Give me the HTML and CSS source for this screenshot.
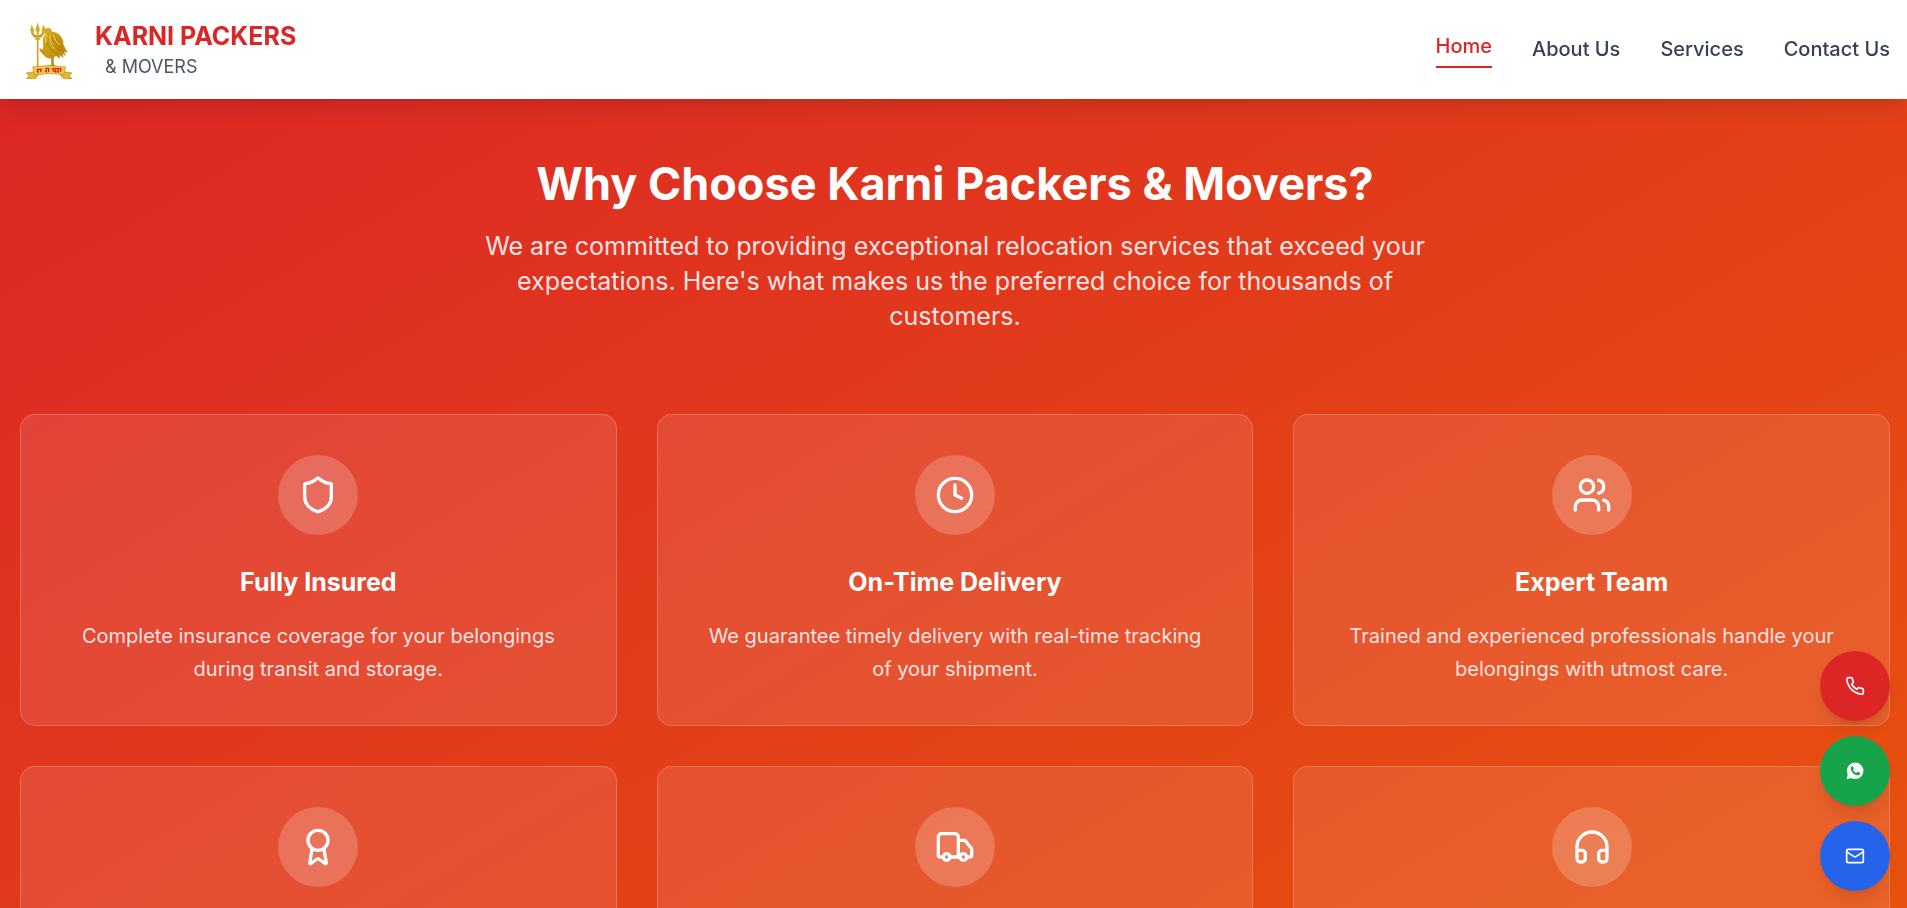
FILE: index.html
```html
<!DOCTYPE html>
<html lang="en">
<head>
<meta charset="utf-8">
<meta name="viewport" content="width=device-width, initial-scale=1">
<title>Karni Packers &amp; Movers</title>
<link rel="stylesheet" href="styles.css">
</head>
<body>
<header class="header">
  <a class="brand" href="#">
    <svg class="brand-logo" viewBox="15 12 180 180" aria-hidden="true">
      <defs>
        <linearGradient id="gold" x1="0" y1="0" x2="1" y2="1">
          <stop offset="0" stop-color="#dcb32a"/>
          <stop offset="0.5" stop-color="#c6960f"/>
          <stop offset="1" stop-color="#b58210"/>
        </linearGradient>
      </defs>
      <g fill="none" stroke="#cfa224" stroke-linecap="round" stroke-linejoin="round">
        <path stroke-width="5" d="M68 44V166"/>
        <path stroke-width="7" d="M51 43Q49 64 68 64Q87 64 85 43"/>
        <path stroke-width="5" d="M57 65H79M62 72H74"/>
      </g>
      <g fill="#d6ab26">
        <path d="M68 22L75 44L68 56L61 44Z"/>
        <path d="M50 29L58 46L53 56L45 46Z"/>
        <path d="M86 29L93 46L85 56L79 46Z"/>
      </g>
      <path fill="url(#gold)" d="M85 50Q89 39 99 38Q109 39 111 50Q130 51 139 66Q147 78 145 88L158 114L147 110L153 124L142 116L146 129L133 120L136 131L122 122L116 129L117 154H109L108 130Q90 132 84 115L76 109L83 103Q87 90 83 78Q84 62 94 54L86 57Z"/>
      <g fill="none" stroke="#8e6505" stroke-width="2" opacity="0.7">
        <path d="M101 68Q112 100 145 110M109 63Q116 90 145 101M120 60Q124 79 141 90M96 84Q104 108 128 117"/>
      </g>
      <g fill="none" stroke="#efd660" stroke-width="3">
        <path d="M106 61Q103 85 119 101M116 60Q119 77 134 90M94 59Q89 71 92 83"/>
      </g>
      <path fill="none" stroke="#b5830d" stroke-width="4" stroke-linecap="round" d="M86 117L75 102M102 156L113 150L124 156"/>
      <path fill="#e2b82c" stroke="#b98a14" stroke-width="2" d="M60 170L34 174L43 182L34 191L62 190L70 180ZM145 170L171 174L163 182L171 191L144 190L136 180Z"/>
      <path fill="#f2cf4a" stroke="#b98a14" stroke-width="2" d="M53 156Q102 147 152 156L146 179Q102 171 60 180Z"/>
      <path fill="none" stroke="#d92c1d" stroke-width="4" d="M65 163H82M69 163V172L65 169M77 163V172M91 160H103M94 160V170L90 167M101 160V171M110 161H140M115 161V170M122 161V171L118 167M130 162V171L126 168M137 163V172"/>
    </svg>
    <span class="brand-text">
      <span class="brand-name">KARNI PACKERS</span>
      <span class="brand-sub">&amp; MOVERS</span>
    </span>
  </a>
  <nav class="nav">
    <a class="nav-link nav-link-active" href="#">Home</a>
    <a class="nav-link" href="#">About Us</a>
    <a class="nav-link" href="#">Services</a>
    <a class="nav-link" href="#">Contact Us</a>
  </nav>
</header>

<main class="why">
  <div class="intro">
    <h1 class="intro-title">Why Choose Karni Packers &amp; Movers?</h1>
    <p class="intro-text">We are committed to providing exceptional relocation services that exceed your expectations. Here's what makes us the preferred choice for thousands of customers.</p>
  </div>
  <div class="cards">
    <article class="card">
      <div class="card-icon"><svg class="icon" viewBox="0 0 24 24"><path d="M20 13c0 5-3.5 7.5-7.66 8.95a1 1 0 0 1-.67-.01C7.5 20.5 4 18 4 13V6a1 1 0 0 1 1-1c2 0 4.5-1.2 6.24-2.72a1.17 1.17 0 0 1 1.52 0C14.51 3.81 17 5 19 5a1 1 0 0 1 1 1z"/></svg></div>
      <h2 class="card-title">Fully Insured</h2>
      <p class="card-text">Complete insurance coverage for your belongings during transit and storage.</p>
    </article>
    <article class="card">
      <div class="card-icon"><svg class="icon" viewBox="0 0 24 24"><circle cx="12" cy="12" r="10"/><path d="M12 6v6l4 2"/></svg></div>
      <h2 class="card-title">On-Time Delivery</h2>
      <p class="card-text">We guarantee timely delivery with real-time tracking of your shipment.</p>
    </article>
    <article class="card">
      <div class="card-icon"><svg class="icon" viewBox="0 0 24 24"><path d="M16 21v-2a4 4 0 0 0-4-4H6a4 4 0 0 0-4 4v2"/><circle cx="9" cy="7" r="4"/><path d="M22 21v-2a4 4 0 0 0-3-3.87M16 3.13a4 4 0 0 1 0 7.75"/></svg></div>
      <h2 class="card-title">Expert Team</h2>
      <p class="card-text">Trained and experienced professionals handle your belongings with utmost care.</p>
    </article>
    <article class="card">
      <div class="card-icon"><svg class="icon" viewBox="0 0 24 24"><path d="m15.477 12.89 1.515 8.526a.5.5 0 0 1-.81.47l-3.58-2.687a1 1 0 0 0-1.197 0l-3.586 2.686a.5.5 0 0 1-.81-.469l1.514-8.526"/><circle cx="12" cy="8" r="6"/></svg></div>
    </article>
    <article class="card">
      <div class="card-icon"><svg class="icon" viewBox="0 0 24 24"><path d="M14 18V6a2 2 0 0 0-2-2H4a2 2 0 0 0-2 2v11a1 1 0 0 0 1 1h2M15 18H9M19 18h2a1 1 0 0 0 1-1v-3.65a1 1 0 0 0-.22-.624l-3.48-4.35A1 1 0 0 0 17.52 8H14"/><circle cx="17" cy="18" r="2"/><circle cx="7" cy="18" r="2"/></svg></div>
    </article>
    <article class="card">
      <div class="card-icon"><svg class="icon" viewBox="0 0 24 24"><path d="M3 14h3a2 2 0 0 1 2 2v3a2 2 0 0 1-2 2H5a2 2 0 0 1-2-2v-7a9 9 0 0 1 18 0v7a2 2 0 0 1-2 2h-1a2 2 0 0 1-2-2v-3a2 2 0 0 1 2-2h3"/></svg></div>
    </article>
  </div>
</main>

<div class="contact">
  <a class="contact-link contact-phone" href="#" aria-label="Call"><svg class="icon contact-icon" viewBox="0 0 24 24"><path d="M22 16.92v3a2 2 0 0 1-2.18 2 19.79 19.79 0 0 1-8.63-3.07 19.5 19.5 0 0 1-6-6 19.79 19.79 0 0 1-3.07-8.67A2 2 0 0 1 4.11 2h3a2 2 0 0 1 2 1.72 12.84 12.84 0 0 0 .7 2.81 2 2 0 0 1-.45 2.11L8.09 9.91a16 16 0 0 0 6 6l1.27-1.27a2 2 0 0 1 2.11-.45 12.84 12.84 0 0 0 2.81.7A2 2 0 0 1 22 16.92z"/></svg></a>
  <a class="contact-link contact-whatsapp" href="#" aria-label="WhatsApp"><svg class="contact-icon" viewBox="0 0 24 24"><circle cx="12.2" cy="11.8" r="9.9" fill="#fff"/><path fill="#fff" d="M3.4 15.5L2 22l6.8-1.8z"/><path fill="#16a34a" d="M8.1 6.6c.5-.5 1.200-.5 1.500.1l.9 2c.2.5.1.8-.3 1.300l-.6.7c.9 1.700 2.200 2.900 4.100 3.700l1-1.200c.3-.4.6-.4 1-.2l2 1c.5.2.6.5.5 1-.3 1.700-1.900 2.400-3.400 2.100-4.100-.8-7.400-4-7.900-7.500-.1-1.200.4-2.200 1.200-3z"/></svg></a>
  <a class="contact-link contact-mail" href="#" aria-label="Email"><svg class="icon contact-icon" viewBox="0 0 24 24"><rect x="2" y="4" width="20" height="16" rx="2"/><path d="m22 7-8.97 5.700a1.940 1.940 0 0 1-2.060 0L2 7"/></svg></a>
</div>
</body>
</html>
```

FILE: styles.css
```css
* {
  box-sizing: border-box;
  margin: 0;
  padding: 0;
}

body {
  height: 100vh;
  overflow: hidden;
  font-family: Inter, "Liberation Sans", sans-serif;
  font-size: 20px;
  line-height: 30px;
}

a {
  color: inherit;
  text-decoration: none;
}

.header {
  position: sticky;
  top: 0;
  z-index: 10;
  display: flex;
  align-items: center;
  justify-content: space-between;
  padding: 19px 17px 20px 20px;
  background: #fff;
  box-shadow: 0 12px 19px -4px rgba(0, 0, 0, 0.1), 0 5px 8px -5px rgba(0, 0, 0, 0.1);
}

.brand {
  display: flex;
  align-items: center;
  gap: 15px;
}

.brand-logo {
  width: 60px;
  height: 60px;
}

.brand-text {
  display: flex;
  flex-direction: column;
}

.brand-name {
  color: #dc2626;
  font-size: 25px;
  font-weight: 700;
  line-height: 35px;
}

.brand-sub {
  margin-left: 10px;
  color: #4b5563;
  font-size: 18px;
  line-height: 25px;
}

.nav {
  display: flex;
  align-items: center;
  gap: 40px;
}

.nav-link {
  color: #374151;
  font-weight: 500;
}

.nav-link-active {
  padding-bottom: 5px;
  border-bottom: 2px solid #dc2626;
  color: #dc2626;
}

.why {
  margin-top: -40px;
  padding: 100px 17px 100px 20px;
  background: linear-gradient(to bottom right, #dc2626, #ea580c);
  color: #fff;
}

.intro {
  display: flex;
  flex-direction: column;
  align-items: center;
  gap: 20px;
  margin-bottom: 80px;
  text-align: center;
}

.intro-title {
  font-size: 45px;
  font-weight: 700;
  line-height: 50px;
}

.intro-text {
  max-width: 960px;
  color: #fee2e2;
  font-size: 25px;
  line-height: 35px;
}

.cards {
  display: grid;
  grid-template-columns: repeat(3, 1fr);
  grid-auto-rows: 1fr;
  gap: 40px;
}

.card {
  display: flex;
  flex-direction: column;
  align-items: center;
  padding: 40px 40px 39px;
  border: 1px solid rgba(255, 255, 255, 0.2);
  border-radius: 15px;
  background: rgba(255, 255, 255, 0.1);
  text-align: center;
}

.card-icon {
  display: flex;
  align-items: center;
  justify-content: center;
  width: 80px;
  height: 80px;
  margin-bottom: 30px;
  border-radius: 50%;
  background: rgba(255, 255, 255, 0.2);
}

.icon {
  width: 40px;
  height: 40px;
  fill: none;
  stroke: #fff;
  stroke-width: 2;
  stroke-linecap: round;
  stroke-linejoin: round;
}

.card-title {
  margin-bottom: 20px;
  font-size: 25px;
  font-weight: 700;
  line-height: 35px;
}

.card-text {
  color: #fee2e2;
  line-height: 33px;
}

.contact {
  position: fixed;
  right: 17px;
  bottom: 17px;
  z-index: 20;
  display: flex;
  flex-direction: column;
  gap: 15px;
}

.contact-link {
  display: flex;
  align-items: center;
  justify-content: center;
  width: 70px;
  height: 70px;
  border-radius: 50%;
  box-shadow: 0 12px 19px -4px rgba(0, 0, 0, 0.1), 0 5px 8px -5px rgba(0, 0, 0, 0.1);
}

.contact-icon {
  width: 20px;
  height: 20px;
}

.contact-phone {
  background: #dc2626;
}

.contact-whatsapp {
  background: #16a34a;
}

.contact-mail {
  background: #2563eb;
}
```
